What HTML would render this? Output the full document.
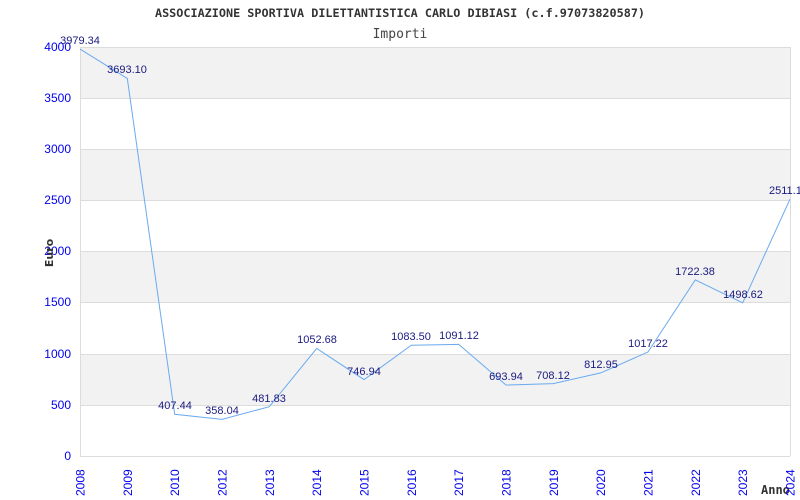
<!DOCTYPE html>
<html><head><meta charset="utf-8"><style>body{margin:0;background:#fff}svg{display:block}</style></head><body>
<svg width="800" height="500" xmlns="http://www.w3.org/2000/svg">
<rect width="800" height="500" fill="#fff"/>
<g fill="#f2f2f2">
<rect x="80" y="47" width="710" height="51"/>
<rect x="80" y="149" width="710" height="51"/>
<rect x="80" y="251" width="710" height="52"/>
<rect x="80" y="354" width="710" height="51"/>
</g>
<g stroke="#dcdcdc" stroke-width="1">
<line x1="80" y1="47.5" x2="790" y2="47.5"/>
<line x1="80" y1="98.5" x2="790" y2="98.5"/>
<line x1="80" y1="149.5" x2="790" y2="149.5"/>
<line x1="80" y1="200.5" x2="790" y2="200.5"/>
<line x1="80" y1="251.5" x2="790" y2="251.5"/>
<line x1="80" y1="302.5" x2="790" y2="302.5"/>
<line x1="80" y1="354.5" x2="790" y2="354.5"/>
<line x1="80" y1="405.5" x2="790" y2="405.5"/>
<line x1="80" y1="456.5" x2="790" y2="456.5"/>
<line x1="80.5" y1="47" x2="80.5" y2="456"/>
<line x1="790.5" y1="47" x2="790.5" y2="456"/>
</g>
<text x="400" y="17" text-anchor="middle" font-family="'DejaVu Sans Mono',monospace" font-weight="bold" font-size="11.8" fill="#333">ASSOCIAZIONE SPORTIVA DILETTANTISTICA CARLO DIBIASI (c.f.97073820587)</text>
<text x="400" y="38" text-anchor="middle" font-family="'DejaVu Sans Mono',monospace" font-size="13" fill="#444">Importi</text>
<g font-family="'Liberation Sans',sans-serif" font-size="12" fill="#0000ee" text-anchor="end">
<text x="71" y="51">4000</text><text x="71" y="102">3500</text><text x="71" y="153">3000</text><text x="71" y="204">2500</text><text x="71" y="255">2000</text><text x="71" y="306">1500</text><text x="71" y="358">1000</text><text x="71" y="409">500</text><text x="71" y="460">0</text>
</g>
<text transform="translate(53,253) rotate(-90)" text-anchor="middle" font-family="'DejaVu Sans',sans-serif" font-weight="bold" font-size="11" fill="#333">Euro</text>
<text x="761" y="494" font-family="'DejaVu Sans Mono',monospace" font-weight="bold" font-size="12" fill="#333">Anno</text>
<g font-family="'Liberation Sans',sans-serif" font-size="12" fill="#0000ee" text-anchor="start">
<text transform="translate(84.5,496) rotate(-90)">2008</text>
<text transform="translate(131.8,496) rotate(-90)">2009</text>
<text transform="translate(179.2,496) rotate(-90)">2010</text>
<text transform="translate(226.5,496) rotate(-90)">2012</text>
<text transform="translate(273.8,496) rotate(-90)">2013</text>
<text transform="translate(321.2,496) rotate(-90)">2014</text>
<text transform="translate(368.5,496) rotate(-90)">2015</text>
<text transform="translate(415.8,496) rotate(-90)">2016</text>
<text transform="translate(463.2,496) rotate(-90)">2017</text>
<text transform="translate(510.5,496) rotate(-90)">2018</text>
<text transform="translate(557.8,496) rotate(-90)">2019</text>
<text transform="translate(605.2,496) rotate(-90)">2020</text>
<text transform="translate(652.5,496) rotate(-90)">2021</text>
<text transform="translate(699.8,496) rotate(-90)">2022</text>
<text transform="translate(747.2,496) rotate(-90)">2023</text>
<text transform="translate(794.5,496) rotate(-90)">2024</text>
</g>
<polyline fill="none" stroke="#6aaaf0" stroke-width="1" points="80,49.1 127.3,78.4 174.7,414.3 222,419.4 269.3,406.7 316.7,348.4 364,379.6 411.3,345.2 458.7,344.4 506,385 553.3,383.6 600.7,372.9 648,352 695.3,279.9 742.7,302.8 790,199.2"/>
<g font-family="'Liberation Sans',sans-serif" font-size="11" fill="#1a1a80" text-anchor="middle">
<text x="80" y="44">3979.34</text>
<text x="127" y="73">3693.10</text>
<text x="175" y="409">407.44</text>
<text x="222" y="414">358.04</text>
<text x="269" y="402">481.83</text>
<text x="317" y="343">1052.68</text>
<text x="364" y="375">746.94</text>
<text x="411" y="340">1083.50</text>
<text x="459" y="339">1091.12</text>
<text x="506" y="380">693.94</text>
<text x="553" y="379">708.12</text>
<text x="601" y="368">812.95</text>
<text x="648" y="347">1017.22</text>
<text x="695" y="275">1722.38</text>
<text x="743" y="298">1498.62</text>
<text x="769" y="194" text-anchor="start">2511.10</text>
</g>
</svg>
</body></html>
